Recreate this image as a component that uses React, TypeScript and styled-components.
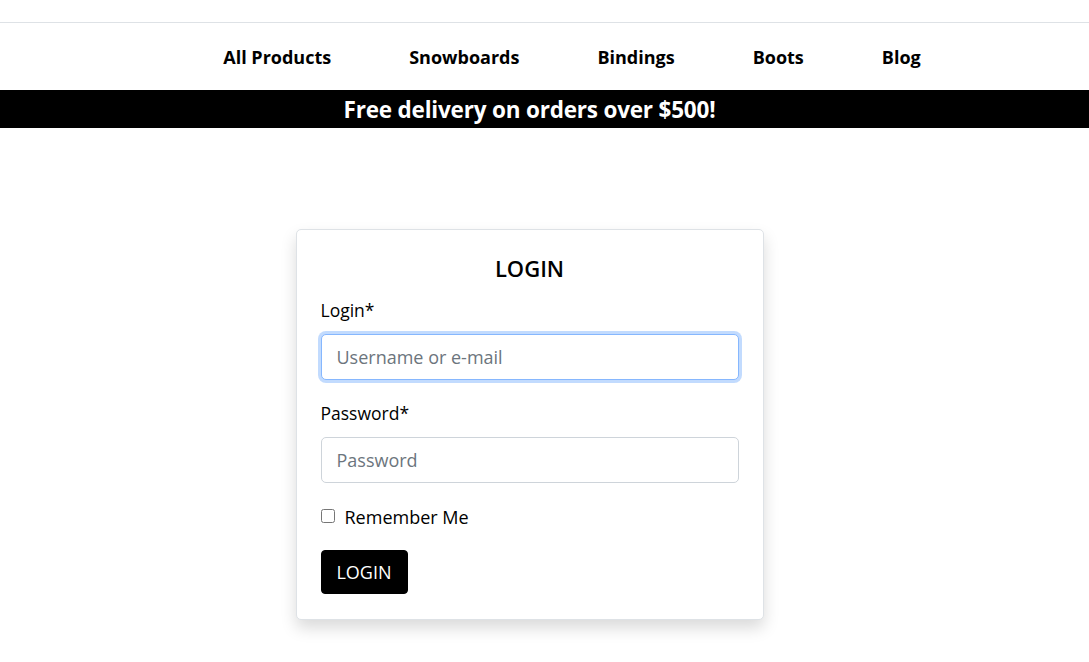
import React, { useState } from 'react';
import styled, { createGlobalStyle } from 'styled-components';

const GlobalStyle = createGlobalStyle`
  html, body {
    margin: 0;
    padding: 0;
    background: #ffffff;
  }
  body {
    font-family: 'Open Sans', 'Noto Sans', sans-serif;
    color: #000000;
  }
  * {
    box-sizing: border-box;
  }
`;

const Page = styled.div`
  width: 1059px;
  min-height: 662px;
`;

const TopStrip = styled.div`
  height: 23px;
  width: 1089px;
  border-bottom: 1px solid #dee2e6;
`;

const NavBar = styled.nav`
  height: 67px;
  width: 1089px;
  display: flex;
  justify-content: center;
  align-items: center;
  padding-left: 55px;
`;

const NavList = styled.ul`
  display: flex;
  list-style: none;
  margin: 0;
  padding: 0;
  gap: 78px;
`;

const NavLink = styled.a`
  font-size: 18px;
  font-weight: 700;
  color: #000;
  text-decoration: none;
  letter-spacing: 0;
  cursor: pointer;
`;

const Banner = styled.div`
  height: 38px;
  width: 1089px;
  background: #000;
  color: #fff;
  display: flex;
  justify-content: center;
  align-items: center;
  padding-right: 30px;
  font-size: 22.5px;
  font-weight: 700;
  letter-spacing: -0.2px;
`;

const Main = styled.main`
  display: flex;
  justify-content: center;
  padding-top: 101px;
`;

const Card = styled.form`
  width: 468px;
  background: #fff;
  border: 1px solid #dee2e6;
  border-radius: 5px;
  box-shadow: 0 8px 16px rgba(0, 0, 0, 0.15);
  padding: 24px 24px 25px;
  display: flex;
  flex-direction: column;
`;

const Title = styled.h2`
  margin: 0 0 15px;
  text-align: center;
  font-size: 22px;
  font-weight: 600;
  line-height: 28px;
`;

const Label = styled.label`
  font-size: 17.5px;
  line-height: 27px;
  margin-bottom: 10px;
`;

const Input = styled.input<{ $focused?: boolean }>`
  width: 100%;
  height: 46px;
  padding: 0 15px;
  font-family: inherit;
  font-size: 18px;
  color: #212529;
  border: 1px solid ${p => (p.$focused ? '#86b7fe' : '#ced4da')};
  border-radius: 5px;
  outline: none;
  box-shadow: ${p => (p.$focused ? '0 0 0 3px rgba(13, 110, 253, 0.25)' : 'none')};
  margin-bottom: 20px;

  &::placeholder {
    color: #6c757d;
  }
`;

const CheckRow = styled.label`
  display: flex;
  align-items: center;
  gap: 10px;
  font-size: 18px;
  line-height: 27px;
  margin: 1px 0 19px;
`;

const Check = styled.input`
  width: 14px;
  height: 14px;
  margin: 0 0 3px;
`;

const SubmitButton = styled.button`
  align-self: flex-start;
  width: 87px;
  height: 44px;
  background: #000;
  color: #fff;
  border: 1px solid #000;
  border-radius: 4px;
  font-family: inherit;
  font-size: 18px;
  cursor: pointer;
`;

const links = ['All Products', 'Snowboards', 'Bindings', 'Boots', 'Blog'];

const App: React.FC = () => {
  const [login, setLogin] = useState('');
  const [password, setPassword] = useState('');
  const [remember, setRemember] = useState(false);

  return (
    <>
      <GlobalStyle />
      <Page>
        <TopStrip />
        <NavBar>
          <NavList>
            {links.map(l => (
              <li key={l}>
                <NavLink>{l}</NavLink>
              </li>
            ))}
          </NavList>
        </NavBar>
        <Banner>Free delivery on orders over $500!</Banner>
        <Main>
          <Card onSubmit={e => e.preventDefault()}>
            <Title>LOGIN</Title>
            <Label htmlFor="login">Login*</Label>
            <Input
              id="login"
              $focused
              placeholder="Username or e-mail"
              value={login}
              onChange={e => setLogin(e.target.value)}
            />
            <Label htmlFor="password">Password*</Label>
            <Input
              id="password"
              type="password"
              placeholder="Password"
              value={password}
              onChange={e => setPassword(e.target.value)}
            />
            <CheckRow>
              <Check
                type="checkbox"
                checked={remember}
                onChange={e => setRemember(e.target.checked)}
              />
              Remember Me
            </CheckRow>
            <SubmitButton type="submit">LOGIN</SubmitButton>
          </Card>
        </Main>
      </Page>
    </>
  );
};

export default App;
